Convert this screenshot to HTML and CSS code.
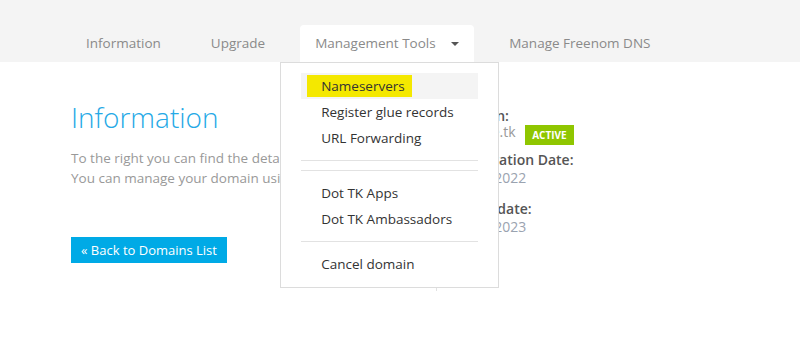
FILE: index.html
```html
<!DOCTYPE html>
<html lang="en">
<head>
    <meta charset="UTF-8">
    <meta name="viewport" content="width=device-width, initial-scale=1.0">
    <title>Domain Information</title>
    <link rel="stylesheet" href="styles.css">
</head>
<body>
    <div class="nav-bar">
        <ul class="tabs">
            <li class="tab">Information</li>
            <li class="tab">Upgrade</li>
            <li class="tab active">
                Management Tools <span class="caret"></span>
                <ul class="dropdown">
                    <li class="menu-item hover"><span class="marked">Nameservers</span></li>
                    <li class="menu-item">Register glue records</li>
                    <li class="menu-item">URL Forwarding</li>
                    <li class="divider"></li>
                    <li class="divider"></li>
                    <li class="menu-item">Dot TK Apps</li>
                    <li class="menu-item">Dot TK Ambassadors</li>
                    <li class="divider"></li>
                    <li class="menu-item">Cancel domain</li>
                </ul>
            </li>
            <li class="tab">Manage Freenom DNS</li>
        </ul>
    </div>

    <div class="container">
        <div class="info-col">
            <h1>Information</h1>
            <p>To the right you can find the details of your domain.<br>
            You can manage your domain using the tabs above.</p>
            <a class="btn" href="#">&laquo; Back to Domains List</a>
        </div>
        <div class="details-col">
            <div class="detail">
                <div class="detail-label">Domain:</div>
                <div class="detail-value domain">my-site.tk <span class="badge">ACTIVE</span></div>
            </div>
            <div class="detail">
                <div class="detail-label">Registration Date:</div>
                <div class="detail-value">11/06/2022</div>
            </div>
            <div class="detail">
                <div class="detail-label">Expiry date:</div>
                <div class="detail-value">11/06/2023</div>
            </div>
        </div>
    </div>
</body>
</html>
```

FILE: styles.css
```css
body {
    font-family: 'Open Sans', 'Noto Sans', sans-serif;
    font-size: 13.5px;
    margin: 0;
    min-height: 342px;
    background-color: #fff;
    color: #333;
}
ul {
    list-style: none;
    margin: 0;
    padding: 0;
}
.nav-bar {
    background-color: #f4f4f4;
    height: 62px;
    display: flex;
    align-items: flex-end;
}
.tabs {
    display: flex;
    gap: 20px;
    padding-left: 71px;
}
.tab {
    position: relative;
    padding: 0 15px;
    line-height: 37px;
    color: #8a8a8a;
    white-space: nowrap;
    border-radius: 4px 4px 0 0;
}
.tab.active {
    background-color: #fff;
}
.caret {
    display: inline-block;
    width: 0;
    height: 0;
    margin-left: 12px;
    vertical-align: middle;
    border-left: 4px solid transparent;
    border-right: 4px solid transparent;
    border-top: 4px solid #555;
}
.dropdown {
    position: absolute;
    top: 100%;
    left: -20px;
    width: 177px;
    padding: 10px 20px;
    background-color: #fff;
    border: 1px solid #dcdcdc;
    z-index: 10;
}
.menu-item {
    padding: 0 20px;
    line-height: 26px;
    color: #333;
}
.menu-item.hover {
    background-color: #f4f4f4;
}
.marked {
    background-color: #f4e800;
    padding: 2px 7px 2px 14px;
    margin-left: -14px;
}
.divider {
    height: 1px;
    margin: 9px 0;
    background-color: #e2e2e2;
}
.container {
    display: flex;
    padding: 0 71px;
}
.info-col {
    width: 365px;
    padding-top: 38px;
}
h1 {
    font-weight: 300;
    font-size: 28px;
    line-height: 34px;
    color: #25a9e6;
    margin: 0 0 14px;
}
p {
    color: #999;
    line-height: 20px;
    margin: 0 0 49px;
}
.btn {
    display: inline-block;
    background-color: #00aae6;
    color: #fff;
    font-size: 13px;
    text-decoration: none;
    line-height: 16px;
    padding: 5px 10px;
}
.details-col {
    border-left: 1px solid #e2e2e2;
    padding: 45px 0 0 15px;
    height: 184px;
}
.detail {
    margin-bottom: 8px;
}
.detail + .detail {
    margin-bottom: 13px;
}
.detail-label {
    font-size: 14px;
    font-weight: 600;
    color: #555;
    line-height: 18px;
}
.detail-value {
    font-size: 14px;
    line-height: 18px;
    color: #9aa3b0;
}
.detail-value.domain {
    margin-top: -2px;
    color: #999;
}
.badge {
    display: inline-block;
    background-color: #8fc600;
    color: #fff;
    font-size: 10px;
    font-weight: 700;
    line-height: 20px;
    padding: 0 7px;
    margin: -2px 0 -2px 6px;
    vertical-align: -1.5px;
}
```
